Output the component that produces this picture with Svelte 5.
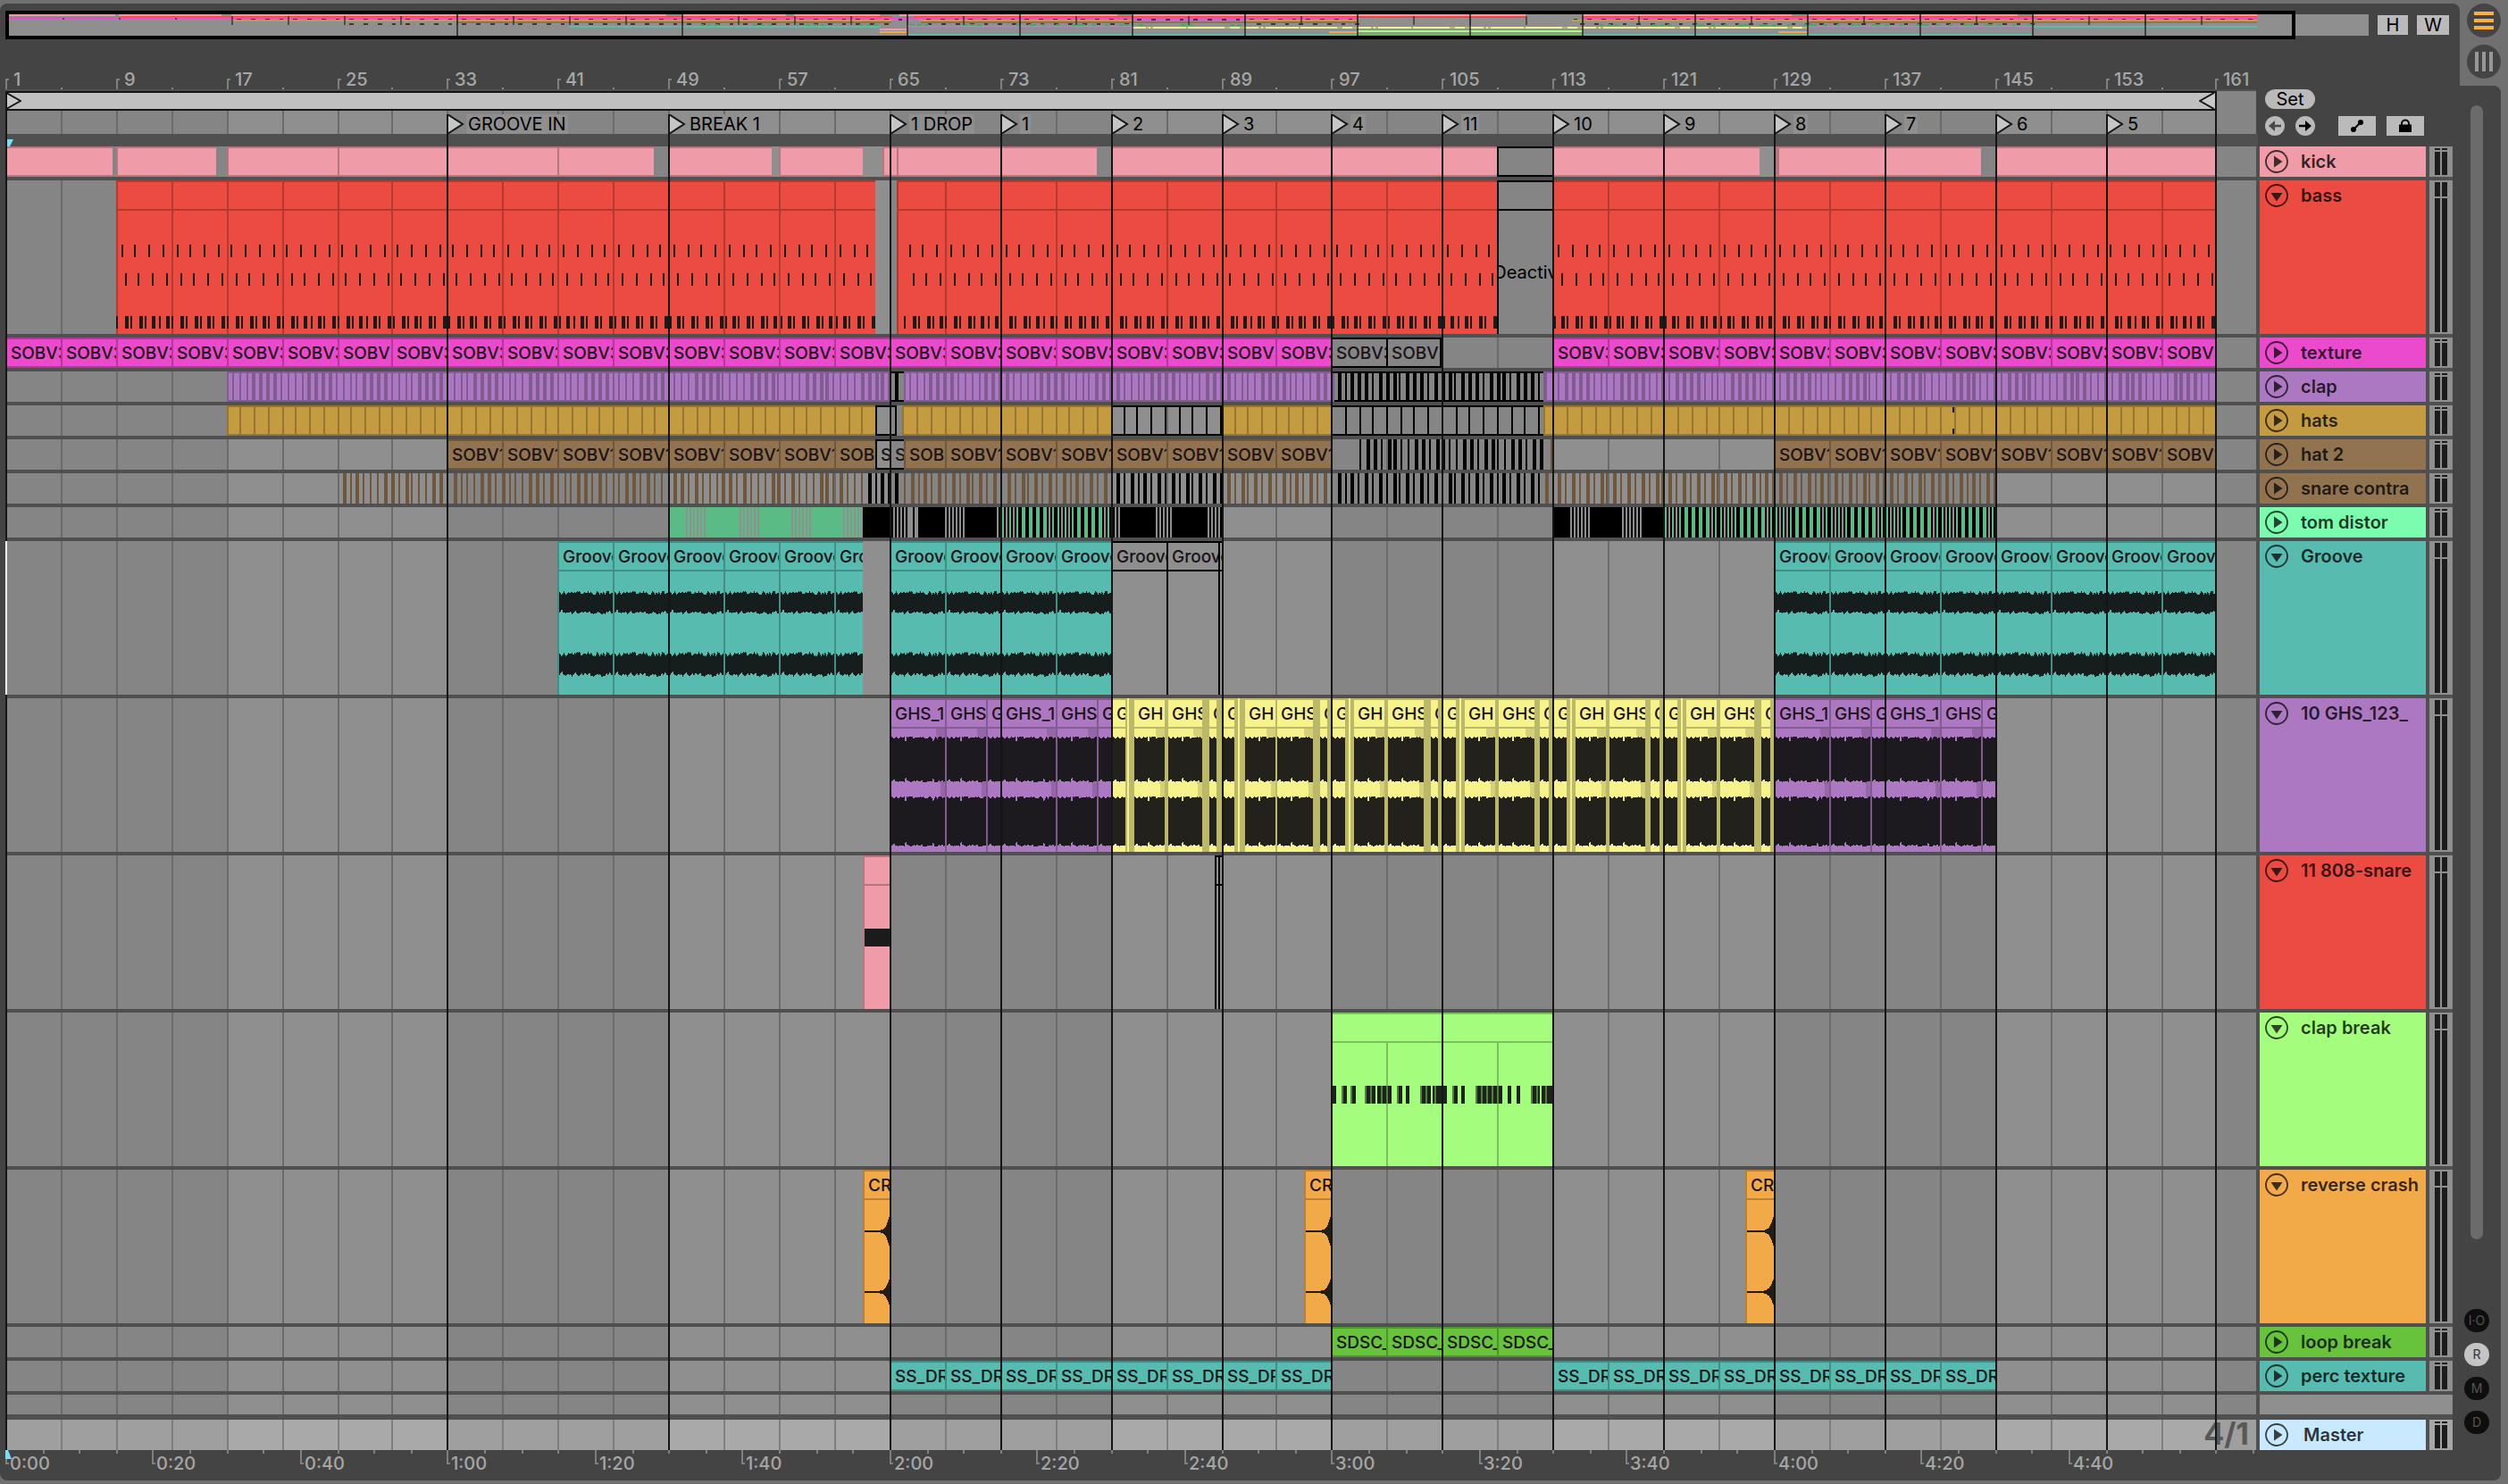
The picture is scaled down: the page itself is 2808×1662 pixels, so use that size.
<script lang="ts">
  interface Clip {
    from: number;
    to: number;
    label?: string;
    off?: boolean;
    color?: string;
    bare?: boolean;
    note?: string;
  }

  // bar, width in px, top, height, fill
  type Mark = [number, number, number, number, string];

  interface Track {
    name: string;
    color: string;
    tall?: boolean;
    clips: Clip[];
    marks?: Mark[];
    waves?: 'groove' | 'ghs' | 'crash';
    gridFrom?: number;
    selected?: boolean;
  }

  const BARS = 162.9;
  const SECONDS_PER_BAR = 1.875;
  const INK = '#1b1b1b';
  const GREY = '#8f8f8f';

  let width = $state(2520);
  let perBar = $derived(width / BARS);

  // The grid sits on even pixels
  function snap(bar: number): number {
    return Math.floor(((bar - 1) * perBar) / 2 + 0.38) * 2;
  }

  function shade(hex: string, k = 0.76): string {
    const n = parseInt(hex.slice(1), 16);
    const c = [n >> 16, (n >> 8) & 255, n & 255].map((v) => Math.round(v * k));
    return `rgb(${c.join(',')})`;
  }

  function series(from: number, to: number, step: number, label?: string, extra: Partial<Clip> = {}): Clip[] {
    const out: Clip[] = [];
    for (let b = from; b < to - 0.01; b += step) out.push({ from: b, to: Math.min(b + step, to), label, ...extra });
    return out;
  }

  function stripes(from: number, to: number, step: number, widths: number[], fill: string, y = 0, h = 34): Mark[] {
    const out: Mark[] = [];
    for (let i = 0, b = from; b < to; i++, b = from + i * step) out.push([b, widths[i % widths.length], y, h, fill]);
    return out;
  }

  // Offsets are [px from the start bar, px wide] at the default zoom
  function spots(bar: number, list: number[][], fill: string, y = 0, h = 34): Mark[] {
    return list.map(([dx, w]) => [bar + (dx + 0.3) / 15.47, w, y, h, fill]);
  }

  function block(from: number, to: number, fill: string): Mark {
    return [from, (to - from) * 15.47, 0, 34, fill];
  }

  const kickEdges = [
    [1, 8.75], [9, 16.3], [17, 25], [25, 33], [33, 41], [41, 47.95], [49, 56.45], [57, 63.1],
    [64.5, 65.5], [65.5, 80], [81, 109]
  ];
  const kick: Clip[] = [
    ...kickEdges.map(([from, to]) => ({ from, to })),
    { from: 109, to: 113, off: true },
    { from: 113, to: 127.95 },
    { from: 129, to: 144 },
    { from: 145, to: 161 }
  ];

  function bassNotes(from: number, to: number): Mark[] {
    return [
      ...stripes(from + 0.37, to, 1, [2], INK, 72, 14),
      ...stripes(from + 0.64, to, 1, [2], INK, 104, 14),
      ...stripes(from + 0.07, to, 1, [2], INK, 152, 14),
      ...stripes(from + 0.67, to - 0.2, 1, [4], INK, 152, 14)
    ];
  }

  const PURPLE = '#ad78c2';
  const GOLD = '#c49b40';
  const BROWN = '#927350';
  const clapWidths = [2, 2, 2, 4, 4, 4, 4, 2];
  const purpleDark = shade(PURPLE);
  const goldDark = shade(GOLD);
  const brownDark = shade(BROWN);
  const TOM = '#5bbb84';

  function tomRolls(from: number, to: number): Mark[] {
    const out: Mark[] = [block(from, to, '#000')];
    for (let b = from; b < to; b += 4) {
      out.push(...spots(b, [[2, 2], [10, 2], [18, 2], [24, 4], [32, 4], [40, 4], [48, 4], [58, 2]], TOM));
      out.push(...spots(b, [[6, 2], [14, 2], [54, 2]], GREY));
    }
    return out;
  }

  function gaps(list: number[]): number[][] {
    return list.map((x) => [x, 2]);
  }

  const tom: Mark[] = [
    block(49, 63.1, TOM),
    ...[50.3, 54.1, 57.85, 61.6].flatMap((b) => spots(b, gaps([0, 4, 8, 12, 16, 20]), GREY)),
    block(63.1, 73, '#000'),
    ...spots(65, [...gaps([4, 8, 12, 16]), [20, 6], [28, 4], ...gaps([62, 66, 70, 74, 78, 82, 120])], GREY),
    ...tomRolls(73, 81),
    block(81, 89, '#000'),
    ...spots(81, gaps([4, 8, 50, 54, 58, 62, 66, 108, 112, 116, 120]), GREY),
    block(113, 121, '#000'),
    ...spots(113, gaps([20, 24, 28, 32, 36, 40, 78, 82, 86, 90, 94, 98]), GREY),
    ...tomRolls(121, 145)
  ];

  function ghsPhrase(from: number): Clip[] {
    return [
      { from, to: from + 4, label: 'GHS_1' },
      { from: from + 4, to: from + 7, label: 'GHS' },
      { from: from + 7, to: from + 8, label: 'G' }
    ];
  }

  const YELLOW = '#f7f38c';
  const YELLOW_DARK = '#bbb86a';
  function ghsCut(from: number): Clip[] {
    const c = { color: YELLOW };
    return [
      { from, to: from + 8, color: YELLOW_DARK, bare: true },
      { from, to: from + 1.02, label: 'G', ...c },
      { from: from + 1.23, to: from + 1.36, bare: true, ...c },
      { from: from + 1.55, to: from + 3.88, label: 'GH', ...c },
      { from: from + 4, to: from + 6.65, label: 'GHS', ...c },
      { from: from + 7, to: from + 7.72, label: 'G', ...c }
    ];
  }

  const breakHits = [
    [0, 4], [10, 6], [20, 6], [36, 12], [50, 4], [56, 10], [72, 6], [82, 4], [98, 12], [112, 16],
    [134, 6], [144, 4], [160, 30], [196, 4], [206, 4], [222, 10], [234, 12]
  ];
  const breakTails = [10, 20, 36, 42, 54, 60, 72, 98, 104, 114, 134, 160, 166, 172, 178, 184, 222, 228, 238];

  const tracks: Track[] = [
    { name: 'kick', color: '#f09ba8', clips: kick, marks: [[129.2, 4, 0, 34, shade('#f09ba8')]] },
    {
      name: 'bass', color: '#ec4b41', tall: true, gridFrom: 0,
      clips: [
        { from: 9, to: 64 }, { from: 65.5, to: 109 },
        { from: 109, to: 113, off: true, note: 'Deactiv' }, { from: 113, to: 161 }
      ],
      marks: [...bassNotes(9, 63.9), ...bassNotes(66, 109), ...bassNotes(113, 161)]
    },
    {
      name: 'texture', color: '#ec4acd',
      clips: [...series(1, 97, 4, 'SOBV3'), ...series(97, 104.9, 4, 'SOBV3', { off: true }), ...series(113, 161, 4, 'SOBV3')],
      marks: [[104.85, 2, 0, 34, '#000']]
    },
    {
      name: 'clap', color: PURPLE,
      clips: [{ from: 17, to: 65 }, { from: 65, to: 66, off: true }, { from: 66, to: 97 }, { from: 97, to: 112.3, off: true }, { from: 112.3, to: 161 }],
      marks: [
        ...stripes(17.42, 65, 0.5, clapWidths, purpleDark),
        [65.42, 4, 0, 34, '#000'],
        ...stripes(66.42, 97, 0.5, clapWidths, purpleDark),
        ...stripes(97.42, 112.3, 0.5, [4, 2, 4, 4], '#000'),
        ...stripes(112.42, 161, 0.5, clapWidths, purpleDark)
      ]
    },
    {
      name: 'hats', color: GOLD,
      clips: [
        { from: 17, to: 63.95 }, { from: 63.95, to: 65.5, off: true }, { from: 65.95, to: 81 },
        { from: 81, to: 89, off: true }, { from: 89, to: 97 }, { from: 97, to: 112.3, off: true }, { from: 112.3, to: 161 }
      ],
      marks: [
        ...stripes(18, 63.8, 1, [2], goldDark),
        [65.4, 2, 0, 34, '#000'],
        ...stripes(67, 81, 1, [2], goldDark),
        ...stripes(81.9, 89, 1, [2], '#000'),
        ...stripes(89.9, 97, 1, [2], goldDark),
        ...stripes(97.95, 112.3, 1, [2], '#000'),
        ...stripes(114.05, 161, 1, [2], goldDark),
        [141.92, 2, 2, 6, INK],
        [141.92, 2, 26, 6, INK]
      ]
    },
    {
      name: 'hat 2', color: BROWN,
      clips: [
        ...series(33, 63.95, 4, 'SOBV1'),
        { from: 63.95, to: 65, label: 'S', off: true }, { from: 65, to: 66, label: 'S', off: true },
        { from: 66, to: 69, label: 'SOB' }, ...series(69, 97, 4, 'SOBV1'), ...series(129, 161, 4, 'SOBV1')
      ],
      marks: [...stripes(99.02, 112.2, 0.5, [2, 4, 4, 2, 4, 4, 2], '#000'), [112.8, 2, 0, 34, brownDark]]
    },
    {
      name: 'snare contra', color: BROWN, clips: [],
      marks: [
        ...stripes(25.42, 63.5, 0.5, [4, 2, 4, 2, 2, 2, 4], brownDark),
        ...stripes(63.42, 65.9, 0.5, [4, 2], '#000'),
        ...stripes(66.02, 81, 0.5, [2, 4], brownDark),
        ...stripes(81.42, 89, 0.5, [4, 2], '#000'),
        ...stripes(89.42, 97, 0.5, [4, 2], brownDark),
        ...stripes(97.42, 112, 0.5, [4, 2], '#000'),
        ...stripes(112.42, 145, 0.5, [4, 2], brownDark)
      ]
    },
    { name: 'tom distor', color: '#7bfcae', clips: [], marks: tom },
    {
      name: 'Groove', color: '#57bbb0', tall: true, waves: 'groove', selected: true,
      clips: [...series(41, 63.1, 4, 'Groove'), ...series(65, 81, 4, 'Groove'), ...series(81, 89, 4, 'Groove', { off: true }), ...series(129, 161, 4, 'Groove')],
      marks: [[88.86, 2, 0, 172, '#000']]
    },
    {
      name: '10 GHS_123_', color: PURPLE, tall: true, waves: 'ghs',
      clips: [...[65, 73].flatMap(ghsPhrase), ...[81, 89, 97, 105, 113, 121].flatMap(ghsCut), ...[129, 137].flatMap(ghsPhrase)]
    },
    {
      name: '11 808-snare', color: '#ec4b41', tall: true,
      clips: [{ from: 63.1, to: 65, color: '#f09ba8' }, { from: 88.52, to: 89, off: true }],
      marks: [[63.22, 28, 82, 20, INK], [88.86, 2, 0, 172, '#000'], [88.76, 2, 100, 8, '#000']]
    },
    {
      name: 'clap break', color: '#a5fd7d', tall: true, gridFrom: 32,
      clips: [{ from: 97, to: 113 }],
      marks: [...spots(97, breakHits, '#1c231a', 82, 20), ...spots(97, gaps(breakTails), '#4f8040', 82, 20)]
    },
    {
      name: 'reverse crash', color: '#f2aa48', tall: true, waves: 'crash',
      clips: [{ from: 63.1, to: 65, label: 'CR' }, { from: 95.03, to: 97, label: 'CR' }, { from: 126.97, to: 129, label: 'CR' }]
    },
    { name: 'loop break', color: '#67c33b', clips: series(97, 113, 4, 'SDSC_') },
    { name: 'perc texture', color: '#57bbb0', clips: [...series(65, 97, 4, 'SS_DR'), ...series(113, 145, 4, 'SS_DR')] }
  ];

  const locators = [
    [33, 'GROOVE IN'], [49, 'BREAK 1'], [65, '1 DROP'], [73, '1'], [81, '2'], [89, '3'], [97, '4'],
    [105, '11'], [113, '10'], [121, '9'], [129, '8'], [137, '7'], [145, '6'], [153, '5']
  ] as [number, string][];

  const rulerBars = Array.from({ length: 21 }, (_, i) => 1 + i * 8);
  const gridBars = Array.from({ length: 39 }, (_, i) => 5 + i * 4);
  const lightBlocks = [17, 49, 81, 113, 145];
  const ticks = Array.from({ length: 62 }, (_, i) => i * 5);

  function clock(s: number): string {
    return `${Math.floor(s / 60)}:${String(s % 60).padStart(2, '0')}`;
  }

  function noise(i: number): number {
    const v = Math.sin(i * 12.9898 + 4.1) * 43758.5453;
    return v - Math.floor(v);
  }

  function wave(x0: number, x1: number, top: number, bottom: number, jag: number): string {
    const up: string[] = [];
    const down: string[] = [];
    for (let x = x0, i = 0; x <= x1; x++, i++) {
      const dip = jag < 6 && (i === 16 || i === 47) ? 7 : 0;
      up.push(`${x},${(top + noise(i) * jag + dip).toFixed(1)}`);
      down.unshift(`${x},${(bottom - noise(i + 91) * jag - dip).toFixed(1)}`);
    }
    return `M${up.join('L')}L${down.join('L')}Z`;
  }

  function crashWave(x0: number, x1: number, y: number, r: number): string {
    const w = x1 - x0;
    const a = x0 + w * 0.55;
    const b = x0 + w * 0.85;
    return `M${x0} ${y - 1}H${a}C${b} ${y - 2} ${b} ${y - 5} ${x1} ${y - r}V${y + r}C${b} ${y + 5} ${b} ${y + 2} ${a} ${y + 1}H${x0}Z`;
  }

  function waveInk(t: Track, c: Clip): string {
    if (t.waves === 'groove') return '#161e1d';
    if (t.waves === 'crash') return '#221e16';
    return c.color ? '#22211c' : '#1c1a1f';
  }

  function wavePaths(t: Track, c: Clip): string[] {
    const x0 = snap(c.from) + 2;
    const x1 = snap(c.to);
    if (t.waves === 'groove') return [wave(x0, x1, 55, 83, 6), wave(x0, x1, 123, 153, 7)];
    if (t.waves === 'ghs') return [wave(x0, x1, 42, 95, 4), wave(x0, x1, 109, 167, 4)];
    return [crashWave(x0, x1, 69, 17), crashWave(x0, x1, 137, 15)];
  }
</script>

{#snippet grid()}
  <svg class="layer" aria-hidden="true">
    {#each lightBlocks as b}
      <rect x={snap(b)} y="0" width={snap(b + 16) - snap(b)} height="100%" class="light" />
    {/each}
    {#each gridBars as b}
      <rect x={snap(b)} y="0" width="2" height="100%" class="line" />
    {/each}
  </svg>
{/snippet}

{#snippet fold(open: boolean)}
  <svg viewBox="0 0 26 26" width="26" height="26" aria-hidden="true">
    <circle cx="13" cy="13" r="12" fill="none" stroke="currentColor" stroke-width="1.8" />
    {#if open}
      <path d="M6.5 10H19.5L13 19.5Z" fill="currentColor" />
    {:else}
      <path d="M10 6.5V19.5L19.5 13Z" fill="currentColor" />
    {/if}
  </svg>
{/snippet}

{#snippet meter()}
  <div class="meter"><i></i><i></i><b></b><b></b></div>
{/snippet}

<div class="window">
  <main class="main">
    <div class="top-row">
      <div class="overview">
        <svg viewBox="0.2 0 162.3 24" preserveAspectRatio="none" aria-hidden="true">
          {#each tracks as t, i}
            {#each t.clips.filter((c) => !c.off) as c}
              <rect x={c.from - 1} y={i * 1.6} width={c.to - c.from} height="2" fill={c.color ?? t.color} />
            {/each}
            {#if t.name === 'clap' || t.name === 'snare contra' || t.name === 'tom distor'}
              {#each t.marks!.filter((m) => m[4] !== '#000' && m[1] < 8) as m, j}
                {#if j % 2 === 0}
                  <rect x={m[0] - 1} y={i * 1.6} width="0.3" height="2" fill={t.name === 'tom distor' ? '#3fae58' : '#4a3425'} />
                {/if}
              {/each}
            {/if}
          {/each}
          {#each gridBars.filter((b) => b < 161) as b}
            <rect x={b - 1} y={b > 16 ? 2 : 4} width="0.13" height={b > 16 ? 10 : 2} fill="#3a2a2a" opacity="0.7" />
          {/each}
          {#each locators as [b]}
            <rect x={b - 1} y="0" width="0.15" height="24" fill="#2c2c2c" opacity="0.8" />
          {/each}
        </svg>
      </div>
      <div class="overview-rest"></div>
      <button class="square letter">H</button>
      <button class="square letter wide">W</button>
    </div>

    <div class="ruler">
      {#each rulerBars as b}
        <span class="bar-no" style="left:{snap(b)}px">{b}</span>
      {/each}
      {#each gridBars.filter((b) => b % 8 === 5) as b}
        <span class="bar-tick" style="left:{snap(b)}px"></span>
      {/each}
    </div>

    <div class="arrangement">
      <div class="heading">
        <div class="scrub" bind:clientWidth={width}>
          <div class="loop" style="width:{snap(161) + 2}px">
            <svg width="18" height="18" viewBox="0 0 18 18" aria-hidden="true"><path d="M1 0L17 9L1 18" /></svg>
            <svg width="18" height="18" viewBox="0 0 18 18" aria-hidden="true"><path d="M17 0L1 9L17 18" /></svg>
          </div>
          <div class="locator-row">
            {@render grid()}
            {#each locators as [b, name]}
              <span class="locator" style="left:{snap(b)}px">
                <svg width="20" height="22" viewBox="0 0 20 22" aria-hidden="true"><path d="M1 0L18 11L1 22Z" /></svg>
                <span>{name}</span>
              </span>
            {/each}
          </div>
        </div>
        <div class="controls">
          <button class="set">Set</button>
          <div class="control-row">
            <button class="round" aria-label="Previous locator">
              <svg class="faded" width="22" height="22" viewBox="0 0 22 22"><path d="M4 11L11 5V9.8H18V12.2H11V17Z" /></svg>
            </button>
            <button class="round" aria-label="Next locator">
              <svg width="22" height="22" viewBox="0 0 22 22"><path d="M18 11L11 5V9.8H4V12.2H11V17Z" /></svg>
            </button>
            <button class="square first" aria-label="Automation mode">
              <svg width="22" height="22" viewBox="0 0 22 22">
                <path d="M7 15L15 7" stroke="#000" stroke-width="2" /><circle cx="7" cy="15" r="3" /><circle cx="15" cy="7" r="3" />
              </svg>
            </button>
            <button class="square" aria-label="Lock envelopes">
              <svg width="22" height="22" viewBox="0 0 22 22">
                <path d="M4 9.5H18V18H4Z" /><path d="M7 10V8.5A4 4 0 0 1 15 8.5V10" fill="none" stroke="#000" stroke-width="2" />
              </svg>
            </button>
          </div>
        </div>
      </div>

      <div class="gap-row"></div>

      {#each tracks as t}
        <div class="row" class:tall={t.tall}>
          <div class="lane" class:selected={t.selected}>
            {@render grid()}
            {#each t.clips as c}
              <div
                class="clip"
                class:off={c.off}
                class:bare={c.bare}
                style="left:{snap(c.from)}px;width:{snap(c.to) - snap(c.from)}px;--c:{c.color ?? t.color};--edge:{c.off ? '#000' : c.color === YELLOW ? YELLOW_DARK : shade(c.color ?? t.color)}"
              >
                {#if !c.bare}<div class="clip-title">{c.label ?? ''}</div>{/if}
                {#if c.note}<div class="note">{c.note}</div>{/if}
              </div>
            {/each}
            <svg class="layer" aria-hidden="true">
              {#if t.gridFrom !== undefined}
                {#each t.clips.filter((c) => !c.off) as c}
                  {#each gridBars.filter((b) => b > c.from && b < c.to) as b}
                    <rect x={snap(b)} y={t.gridFrom} width="2" height="100%" fill={shade(t.color)} />
                  {/each}
                {/each}
              {/if}
              {#each t.marks ?? [] as m}
                <rect x={snap(m[0])} y={m[2]} width={m[1] < 31 ? m[1] : snap(m[0] + m[1] / 15.47) - snap(m[0])} height={m[3]} fill={m[4]} />
              {/each}
              {#if t.name === 'clap'}
                {#each t.clips as c}
                  <rect x={snap(c.from)} y="0" width={snap(c.to) - snap(c.from)} height="2" fill={c.off ? '#000' : purpleDark} />
                {/each}
              {/if}
              {#if t.waves}
                {#each t.clips.filter((c) => !c.off && !c.bare) as c}
                  {#if t.waves === 'ghs' && c.to - c.from > 2}
                    <path d="M{snap(c.to) - 10} 34H{snap(c.to)}V172Z" fill={shade(c.color ?? t.color, 0.86)} />
                  {/if}
                  {#each wavePaths(t, c) as d}
                    <path {d} fill={waveInk(t, c)} />
                  {/each}
                {/each}
              {/if}
            </svg>
          </div>
          <div class="header" style="background:{t.color}">
            <button class="fold" aria-label="Fold {t.name}">{@render fold(!!t.tall)}</button>
            <span class="name">{t.name}</span>
          </div>
          {@render meter()}
        </div>
      {/each}

      <div class="row spare">
        <div class="lane">{@render grid()}</div>
        <div class="spare-head"></div>
      </div>

      <div class="row master">
        <div class="lane">
          {@render grid()}
          <span class="zoom">4/1</span>
        </div>
        <div class="header">
          <button class="fold" aria-label="Fold Master">{@render fold(false)}</button>
          <span class="name">Master</span>
        </div>
        {@render meter()}
      </div>

      <svg class="locator-lines" aria-hidden="true">
        <rect x="0" y="0" width="2" height="504" />
        <rect x="0" y="676" width="2" height="100%" />
        {#each locators as [b]}
          <rect x={snap(b)} y="26" width="2" height="100%" />
        {/each}
        <rect x={snap(161)} y="0" width="2" height="100%" />
      </svg>
      <svg class="insert" width="7" height="8" viewBox="0 0 7 8" aria-hidden="true"><path d="M0 0H7L3 8H0Z" /></svg>
    </div>

    <div class="time-ruler">
      {#each ticks as s}
        {@const left = snap(1 + s / SECONDS_PER_BAR)}
        {#if s % 20 === 0 && s < 300}
          <span class="time" style="left:{left}px">{clock(s)}</span>
        {:else}
          <span class="time-tick" style="left:{left}px"></span>
        {/if}
      {/each}
      <svg width="7" height="10" viewBox="0 0 7 10" aria-hidden="true"><path d="M0 0H3L7 10H0Z" fill="#7fdcf5" /></svg>
    </div>
  </main>

  <aside class="rail">
    <div class="toggles">
      <button aria-label="Arrangement view">
        <svg width="38" height="38" viewBox="0 0 38 38"><path d="M8 9H30V13H8ZM8 17H30V21H8ZM8 25H30V29H8Z" fill="#fbb03b" /></svg>
      </button>
      <button aria-label="Session view">
        <svg width="38" height="38" viewBox="0 0 38 38"><path d="M9 8H13V30H9ZM17 8H21V30H17ZM25 8H29V30H25Z" fill="#989898" /></svg>
      </button>
    </div>
    <div class="rail-body">
      <div class="scrollbar"></div>
      <div class="sections">
        <button>I·O</button>
        <button class="on">R</button>
        <button>M</button>
        <button>D</button>
      </div>
    </div>
  </aside>
</div>

<style>
  :global(body) { margin: 0; background: #707070; }

  .window {
    display: flex;
    padding: 4px 0;
    background: #707070;
    color: #000;
    font: 20px/22px Inter, "Liberation Sans", sans-serif;
  }
  button { border: 0; padding: 0; margin: 0; font: inherit; color: inherit; cursor: pointer; }
  svg { display: block; }

  .main {
    flex: 1;
    min-width: 0;
    padding: 8px 8px 0 6px;
    background: #444;
    border-radius: 8px 8px 0 8px;
  }

  .top-row { display: flex; height: 32px; align-items: center; padding-right: 4px; }
  .overview { flex: 1; box-sizing: border-box; height: 32px; border: 4px solid #000; background: #8f8f8f; }
  .overview svg { width: 100%; height: 24px; shape-rendering: crispEdges; }
  .overview-rest { width: 82px; height: 24px; background: #8f8f8f; margin-right: 10px; }

  .square {
    display: grid;
    place-items: center;
    width: 42px;
    height: 22px;
    background: #bababa;
  }
  .square.letter { width: 34px; }
  .square.wide { width: 36px; margin-left: 10px; }

  .ruler {
    position: relative;
    height: 24px;
    margin: 34px 220px 0 0;
    border-bottom: 2px solid #505050;
    box-sizing: border-box;
    font-weight: 500;
  }
  .bar-no { position: absolute; top: 0; padding-left: 9px; color: #a6a6a6; }
  .bar-no::before {
    content: "";
    position: absolute;
    left: 0;
    top: 10px;
    width: 2px;
    height: 10px;
    border: solid #808080;
    border-width: 2px 0 0 2px;
  }
  .bar-tick { position: absolute; bottom: 0; width: 2px; height: 2px; background: #8a8a8a; }

  .arrangement { position: relative; }
  .heading { display: flex; height: 48px; background: #444; }
  .scrub { flex: 1; min-width: 0; background: #858585; }
  .loop {
    display: flex;
    justify-content: space-between;
    box-sizing: border-box;
    height: 22px;
    border: solid #151515;
    border-width: 2px 2px 2px 0;
    background: #c0c0c0;
  }
  .loop path { fill: #c8c8c8; stroke: #151515; stroke-width: 2; }
  .locator-row { position: relative; height: 26px; overflow: hidden; }
  .locator { position: absolute; top: 4px; display: flex; gap: 2px; }
  .locator path { fill: #c6c6c6; stroke: #151515; stroke-width: 2; }
  .locator > span { padding: 0 2px; background: #8f8f8f; white-space: nowrap; }

  .layer { position: absolute; inset: 0; width: 100%; height: 100%; pointer-events: none; shape-rendering: crispEdges; }
  .light { fill: #8f8f8f; }
  .line { fill: #6b6b6b; }

  .controls { width: 210px; margin-top: -2px; padding-left: 10px; }
  .set { display: block; width: 56px; height: 22px; border-radius: 11px; background: #bababa; }
  .control-row { display: flex; gap: 12px; margin-top: 8px; }
  .round { width: 22px; height: 22px; border-radius: 50%; background: #bababa; }
  .faded { opacity: 0.6; }
  .first { margin-left: 14px; }

  .gap-row { height: 14px; margin-right: 218px; background: #505050; }

  .row { display: flex; height: 34px; border-bottom: 4px solid #505050; }
  .row.tall { height: 172px; }
  .lane { position: relative; flex: 1; min-width: 0; overflow: hidden; background: #858585; }
  .lane.selected::after { content: ""; position: absolute; inset: 0 auto 0 0; width: 2px; background: #fff; }

  .clip {
    position: absolute;
    top: 0;
    bottom: 0;
    box-sizing: border-box;
    overflow: hidden;
    border: solid var(--edge);
    border-width: 2px 0 2px 2px;
    background: var(--c);
  }
  .tall .clip { border-bottom: 0; }
  .clip.off { background: transparent; }
  .clip.bare { border: 0; }
  .clip-title {
    height: 30px;
    padding-left: 4px;
    font-size: 19px;
    font-weight: 500;
    line-height: 32px;
    white-space: nowrap;
    color: #1a1217;
  }
  .tall .clip-title { border-bottom: 2px solid var(--edge); }
  .note { display: flex; justify-content: center; padding-top: 58px; }

  .header {
    display: flex;
    align-items: flex-start;
    box-sizing: border-box;
    width: 190px;
    padding: 4px 0 4px 6px;
    border-left: 4px solid #505050;
    background-clip: padding-box !important;
    overflow: hidden;
  }
  .fold { flex: none; width: 26px; height: 26px; margin-right: 14px; background: none; opacity: 0.72; }
  .name { line-height: 26px; font-weight: 600; white-space: nowrap; color: rgba(0, 0, 0, 0.78); }

  .meter {
    display: grid;
    grid-template-columns: 6px 6px;
    grid-template-rows: 2px 1fr;
    gap: 2px;
    box-sizing: border-box;
    width: 30px;
    padding: 2px 6px;
    border-left: 4px solid #505050;
    background: #8f8f8f;
  }
  .tall .meter { grid-template-rows: 16px 1fr; }
  .meter i, .meter b { background: #1c1c1c; }

  .spare { height: 22px; border-bottom-width: 6px; }
  .spare-head { width: 220px; box-sizing: border-box; border-left: 4px solid #505050; background: #8f8f8f; }

  .master { border-bottom: 0; }
  .master .lane { background: #9f9f9f; }
  .master .light { fill: #a9a9a9; }
  .master .line { fill: #7f7f7f; }
  .master .header { background: #c8e9ff; }
  .master .fold { margin-right: 17px; }
  .master .meter { background: #a6a6a6; background-clip: padding-box; }
  .zoom { position: absolute; right: 8px; top: 0; font-size: 34px; line-height: 32px; font-weight: 700; color: #585858; }

  .locator-lines {
    position: absolute;
    top: 0;
    left: 0;
    width: 100%;
    height: 100%;
    fill: #151515;
    pointer-events: none;
    shape-rendering: crispEdges;
  }
  .insert { position: absolute; left: 2px; top: 54px; fill: #7fdcf5; }

  .time-ruler { position: relative; height: 34px; margin-right: 220px; color: #a6a6a6; font-weight: 500; }
  .time { position: absolute; top: 4px; padding-left: 5px; }
  .time::before {
    content: "";
    position: absolute;
    left: 0;
    top: -4px;
    width: 2px;
    height: 14px;
    border: solid #808080;
    border-width: 0 0 2px 2px;
  }
  .time-tick { position: absolute; top: 0; width: 2px; height: 4px; background: #808080; }
  .time-ruler svg { position: absolute; left: 0; top: 0; }

  .rail { display: flex; flex-direction: column; width: 54px; }
  .toggles { display: flex; flex-direction: column; gap: 8px; height: 92px; padding-left: 8px; box-sizing: border-box; }
  .toggles button { width: 38px; height: 38px; border-radius: 50%; background: #444; }
  .rail-body {
    flex: 1;
    display: flex;
    flex-direction: column;
    gap: 78px;
    margin-right: 8px;
    padding: 22px 0 52px 5px;
    background: #444;
    border-radius: 0 8px 8px 0;
  }
  .scrollbar { flex: 1; width: 14px; margin-left: 7px; border-radius: 7px; background: #6b6b6b; }
  .sections { display: flex; flex-direction: column; gap: 12px; }
  .sections button {
    width: 28px;
    height: 26px;
    border-radius: 13px;
    background: #0e0e0e;
    color: #555;
    font-size: 14px;
    line-height: 26px;
  }
  .sections .on { background: #c4c4c4; color: #333; }
</style>
